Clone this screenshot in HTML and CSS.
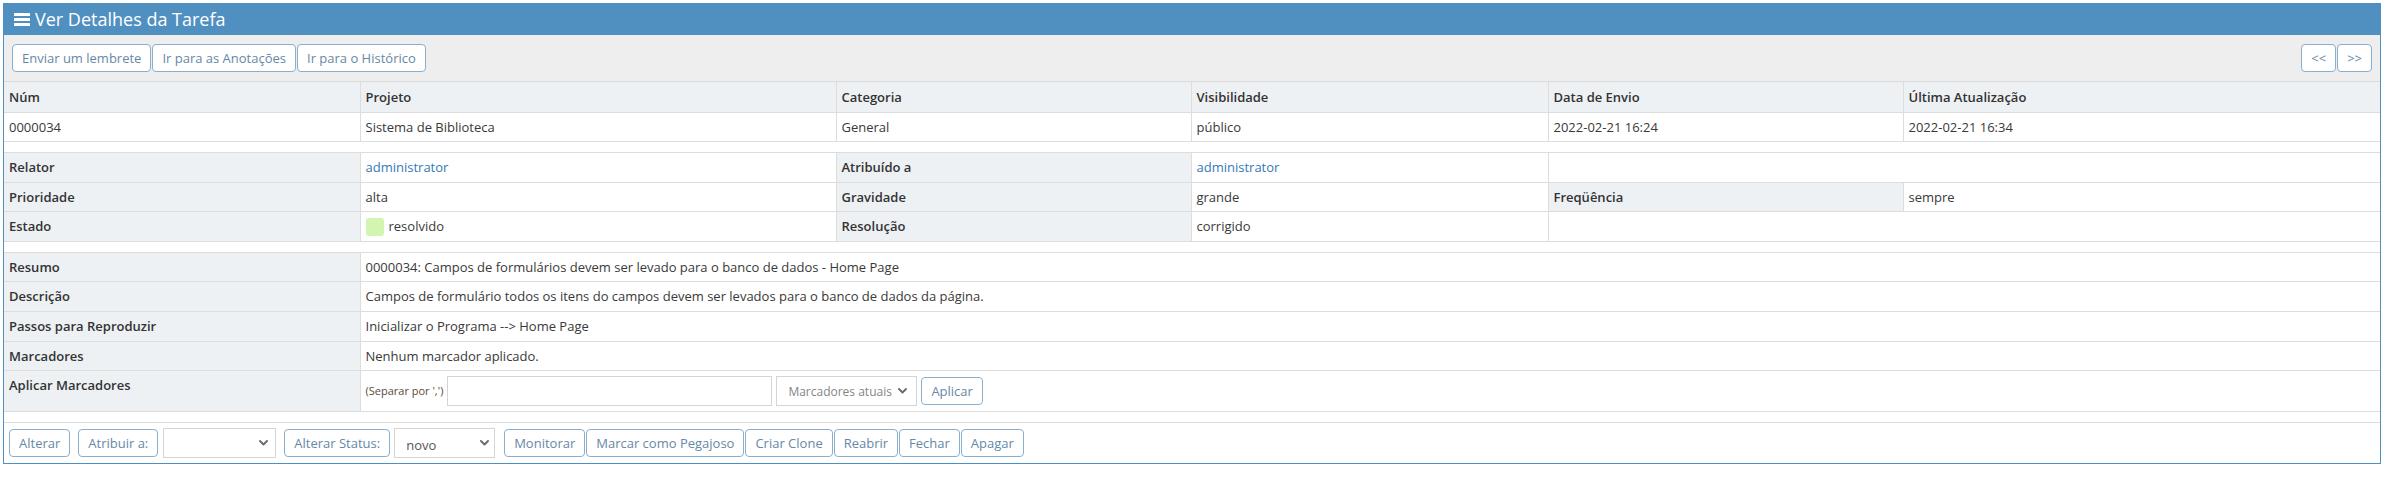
FILE: index.html
```html
<!DOCTYPE html>
<html lang="pt">
<head>
<meta charset="utf-8">
<title>Ver Detalhes da Tarefa</title>
<link rel="stylesheet" href="styles.css">
</head>
<body>
<div class="page">
  <div class="widget">
    <div class="widget-header">
      <h4 class="widget-title">
        <svg class="icon-bars" width="16" height="13" viewBox="0 0 16 13" aria-hidden="true">
          <rect x="0" y="0" width="16" height="3" rx="0.6"/>
          <rect x="0" y="5" width="16" height="3" rx="0.6"/>
          <rect x="0" y="10" width="16" height="3" rx="0.6"/>
        </svg>
        <span>Ver Detalhes da Tarefa</span>
      </h4>
    </div>
    <div class="toolbox">
      <div class="btn-group">
        <a class="btn">Enviar um lembrete</a>
        <a class="btn">Ir para as Anotações</a>
        <a class="btn">Ir para o Histórico</a>
      </div>
      <div class="btn-group">
        <a class="btn btn-nav">&lt;&lt;</a>
        <a class="btn btn-nav">&gt;&gt;</a>
      </div>
    </div>
    <table class="details">
      <colgroup>
        <col class="col-a"><col class="col-b"><col class="col-c"><col class="col-d"><col class="col-e"><col class="col-f">
      </colgroup>
      <thead>
        <tr>
          <th>Núm</th>
          <th>Projeto</th>
          <th>Categoria</th>
          <th>Visibilidade</th>
          <th>Data de Envio</th>
          <th>Última Atualização</th>
        </tr>
      </thead>
      <tbody>
        <tr>
          <td>0000034</td>
          <td>Sistema de Biblioteca</td>
          <td>General</td>
          <td>público</td>
          <td>2022-02-21 16:24</td>
          <td>2022-02-21 16:34</td>
        </tr>
        <tr class="spacer"><td colspan="6"></td></tr>
        <tr>
          <th class="category">Relator</th>
          <td><a class="link">administrator</a></td>
          <th class="category">Atribuído a</th>
          <td><a class="link">administrator</a></td>
          <td colspan="2"></td>
        </tr>
        <tr>
          <th class="category">Prioridade</th>
          <td>alta</td>
          <th class="category">Gravidade</th>
          <td>grande</td>
          <th class="category">Freqüência</th>
          <td>sempre</td>
        </tr>
        <tr>
          <th class="category">Estado</th>
          <td><div class="status"><span class="status-box"></span><span>resolvido</span></div></td>
          <th class="category">Resolução</th>
          <td>corrigido</td>
          <td colspan="2"></td>
        </tr>
        <tr class="spacer"><td colspan="6"></td></tr>
        <tr>
          <th class="category">Resumo</th>
          <td colspan="5">0000034: Campos de formulários devem ser levado para o banco de dados - Home Page</td>
        </tr>
        <tr>
          <th class="category">Descrição</th>
          <td colspan="5">Campos de formulário todos os itens do campos devem ser levados para o banco de dados da página.</td>
        </tr>
        <tr>
          <th class="category">Passos para Reproduzir</th>
          <td colspan="5">Inicializar o Programa --&gt; Home Page</td>
        </tr>
        <tr>
          <th class="category">Marcadores</th>
          <td colspan="5">Nenhum marcador aplicado.</td>
        </tr>
        <tr>
          <th class="category">Aplicar Marcadores</th>
          <td colspan="5">
            <div class="tag-form">
              <span class="hint">(Separar por ',')</span>
              <input class="input tag-input" type="text">
              <span class="select-wrap">
                <select class="select tag-select"><option>Marcadores atuais</option></select>
                <svg class="chev" width="9" height="6" viewBox="0 0 9 6" aria-hidden="true"><path d="M1 1 L4.5 4.5 L8 1"/></svg>
              </span>
              <a class="btn">Aplicar</a>
            </div>
          </td>
        </tr>
        <tr class="spacer"><td colspan="6"></td></tr>
      </tbody>
    </table>
    <div class="actions">
      <a class="btn">Alterar</a>
      <div class="inline-form">
        <a class="btn">Atribuir a:</a>
        <span class="select-wrap">
          <select class="select assign-select"><option></option></select>
          <svg class="chev" width="9" height="6" viewBox="0 0 9 6" aria-hidden="true"><path d="M1 1 L4.5 4.5 L8 1"/></svg>
        </span>
      </div>
      <div class="inline-form narrow">
        <a class="btn">Alterar Status:</a>
        <span class="select-wrap">
          <select class="select status-select"><option>novo</option></select>
          <svg class="chev" width="9" height="6" viewBox="0 0 9 6" aria-hidden="true"><path d="M1 1 L4.5 4.5 L8 1"/></svg>
        </span>
      </div>
      <div class="btn-group spaced">
        <a class="btn">Monitorar</a>
        <a class="btn">Marcar como Pegajoso</a>
        <a class="btn">Criar Clone</a>
        <a class="btn">Reabrir</a>
        <a class="btn">Fechar</a>
        <a class="btn">Apagar</a>
      </div>
    </div>
  </div>
</div>
</body>
</html>
```

FILE: styles.css
```css
html, body {
  margin: 0;
  padding: 0;
  background: #fff;
}

body {
  font-family: "Open Sans", "Liberation Sans", sans-serif;
  font-size: 13px;
  line-height: 1.42857;
  color: #393939;
}

.page {
  padding: 3px 10px 0 3px;
}

.widget {
  border: 1px solid #5090c1;
}

.widget-header {
  background: #5090c1;
  color: #fff;
  height: 31px;
  padding-left: 10px;
  display: flex;
  align-items: center;
}

.widget-title {
  margin: 0;
  font-size: 18px;
  font-weight: 400;
  line-height: 31px;
  display: flex;
  align-items: center;
  gap: 5px;
}

.icon-bars {
  fill: #fff;
  display: block;
}

.toolbox {
  background: #eee;
  border-bottom: 1px solid #dadada;
  padding: 9px 8px;
  display: flex;
  justify-content: space-between;
  align-items: center;
}

.btn-group {
  display: flex;
  gap: 1px;
}

.btn-group.spaced {
  gap: 1px;
  margin-left: 1px;
}

.btn {
  display: inline-block;
  box-sizing: border-box;
  height: 28px;
  padding: 4px 9px;
  line-height: 18px;
  font-size: 13px;
  color: #6688a6;
  background: #fff;
  border: 1px solid #8aafce;
  border-radius: 4px;
  white-space: nowrap;
  cursor: pointer;
}

.btn-nav {
  padding: 4px 9px;
}

.details {
  width: 100%;
  border-collapse: collapse;
  table-layout: fixed;
}

.col-a { width: 356px; }
.col-b { width: 476px; }
.col-c { width: 355px; }
.col-d { width: 357px; }
.col-e { width: 355px; }
.col-f { width: 477px; }

.details th,
.details td {
  padding: 5px;
  text-align: left;
  vertical-align: top;
  border-top: 1px solid #ddd;
  border-left: 1px solid #ddd;
}

.details th:first-child,
.details td:first-child {
  border-left: none;
}

.details thead th {
  border-top: none;
  padding-top: 6px;
  background: #edf1f4;
  font-weight: 600;
  color: #333;
}

.details th.category {
  background: #edf1f4;
  font-weight: 600;
  color: #333;
}

.details tr.spacer td {
  height: 10px;
  padding: 0;
  border-left: none;
}

.link {
  color: #337ab7;
  text-decoration: none;
}

.status {
  display: flex;
  align-items: center;
  gap: 5px;
  height: 18.57px;
}

.status-box {
  display: block;
  flex: none;
  width: 18px;
  height: 18px;
  border-radius: 3px;
  background: #d2f5b0;
}

.tag-form {
  display: flex;
  align-items: center;
  gap: 4px;
}

.hint {
  font-size: 11px;
  color: #5a4a3a;
}

.input {
  box-sizing: border-box;
  height: 30px;
  border: 1px solid #d5d5d5;
  background: #fff;
  padding: 4px 6px;
  font-family: inherit;
  font-size: 13px;
  color: #858585;
  margin: 0;
}

.tag-input {
  width: 325px;
}

.select-wrap {
  position: relative;
  display: block;
  flex: none;
}

.select {
  display: block;
  box-sizing: border-box;
  height: 30px;
  border: 1px solid #d5d5d5;
  border-radius: 0;
  background: #fff;
  padding: 2px 20px 0 11px;
  font-family: inherit;
  font-size: 13px;
  color: #858585;
  margin: 0;
  -webkit-appearance: none;
  appearance: none;
  outline: none;
}

.chev {
  position: absolute;
  right: 8px;
  top: 12px;
  fill: none;
  stroke: #6b6b6b;
  stroke-width: 1.9;
  stroke-linecap: round;
  stroke-linejoin: round;
  pointer-events: none;
}

.tag-select {
  width: 141px;
  padding: 0 12px 0 11px;
  font-size: 12px;
}
.tag-select + .chev { right: 10px; }
.assign-select { width: 113px; }
.status-select { width: 101px; color: #555; padding-top: 4px; }
.status-select + .chev { right: 6px; }

.actions {
  border-top: 1px solid #ddd;
  padding: 5px;
  display: flex;
  align-items: center;
  gap: 8px;
}

.inline-form {
  display: flex;
  align-items: center;
  gap: 5px;
}

.inline-form.narrow {
  gap: 4px;
}
```
